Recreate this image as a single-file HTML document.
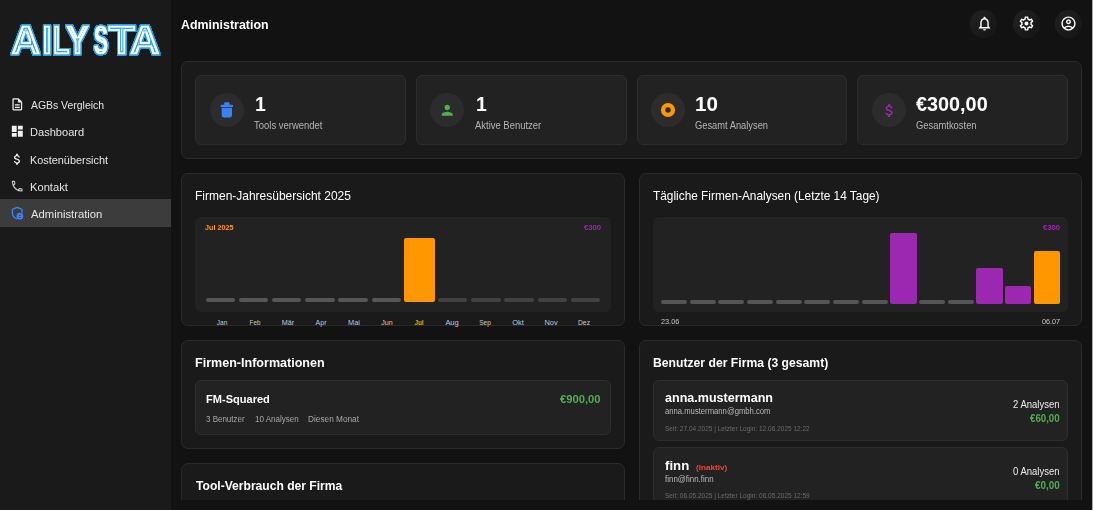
<!DOCTYPE html>
<html lang="de"><head><meta charset="utf-8"><title>Administration</title>
<style>
html,body{margin:0;padding:0;background:#121212;}
body{width:1093px;height:510px;overflow:hidden;position:relative;font-family:"Liberation Sans", sans-serif;}
.b{position:absolute;display:block}
#main{position:absolute;left:170.7px;top:0;width:921.3px;height:499.7px;background:#121212;overflow:hidden}
#edge{position:absolute;left:1092px;top:0;width:1px;height:510px;background:#aaaaaa}
#main .in{position:absolute;left:-170.7px;top:0;width:1093px;height:710px}
#side{position:absolute;left:0;top:0;width:170.7px;height:510px;background:#1a1a1a;overflow:hidden}
.t{position:absolute;white-space:nowrap;line-height:1;display:block}
.act{position:absolute;left:0;top:199.3px;width:170.7px;height:27.4px;background:#3c3c3c}
</style></head>
<body>
<nav id="side">
<div class="act"></div>
<svg class="b" style="left:0;top:0" width="171" height="80" viewBox="0 0 171 80">
<filter id="lg" x="-5%" y="-15%" width="110%" height="130%" color-interpolation-filters="sRGB">
<feComponentTransfer in="SourceAlpha" result="boost"><feFuncA type="linear" slope="5"/></feComponentTransfer>
<feMorphology in="boost" operator="dilate" radius="1" result="d1"/>
<feFlood flood-color="#1e9fe6"/><feComposite in2="d1" operator="in" result="outer"/>
<feMorphology in="SourceAlpha" operator="erode" radius="2" result="e2"/>
<feFlood flood-color="#1e9fe6"/><feComposite in2="e2" operator="in" result="inner"/>
<feMorphology in="SourceAlpha" operator="erode" radius="3" result="e3"/>
<feFlood flood-color="#ffffff"/><feComposite in2="e3" operator="in" result="core"/>
<feMerge><feMergeNode in="outer"/><feMergeNode in="SourceGraphic"/><feMergeNode in="inner"/><feMergeNode in="core"/></feMerge>
</filter>
<text y="54.3" font-family='"Liberation Sans", sans-serif' font-weight="700" font-size="40.5" fill="#ffffff" stroke="#ffffff" stroke-width="0.7" filter="url(#lg)"><tspan x="11.08" textLength="29.60" lengthAdjust="spacingAndGlyphs">A</tspan><tspan x="41.85" textLength="10.61" lengthAdjust="spacingAndGlyphs">I</tspan><tspan x="52.84" textLength="17.02" lengthAdjust="spacingAndGlyphs">L</tspan><tspan x="65.91" textLength="22.94" lengthAdjust="spacingAndGlyphs">Y</tspan><tspan x="93.78" textLength="14.25" lengthAdjust="spacingAndGlyphs">S</tspan><tspan x="108.20" textLength="26.97" lengthAdjust="spacingAndGlyphs">T</tspan><tspan x="129.66" textLength="30.25" lengthAdjust="spacingAndGlyphs">A</tspan></text>
</svg>
<svg class="b" style="left:9.70px;top:96.90px" width="14.6" height="14.6" viewBox="0 0 24 24"><path fill="#f0f0f0" fill-rule="evenodd" d="M8 16h8v2H8zm0-4h8v2H8zm6-10H6c-1.1 0-2 .9-2 2v16c0 1.1.89 2 1.99 2H18c1.1 0 2-.9 2-2V8l-6-6zm4 18H6V4h7v5h5v11z"/></svg>
<svg class="b" style="left:9.70px;top:124.30px" width="14.6" height="14.6" viewBox="0 0 24 24"><path fill="#f0f0f0" fill-rule="evenodd" d="M3 13h8V3H3v10zm0 8h8v-6H3v6zm10 0h8V11h-8v10zm0-18v6h8V3h-8z"/></svg>
<svg class="b" style="left:9.70px;top:151.70px" width="14.6" height="14.6" viewBox="0 0 24 24"><path fill="#f0f0f0" fill-rule="evenodd" d="M11.8 10.9c-2.27-.59-3-1.2-3-2.15 0-1.09 1.01-1.85 2.7-1.85 1.78 0 2.44.85 2.5 2.1h2.21c-.07-1.72-1.12-3.3-3.21-3.81V3h-3v2.16c-1.94.42-3.5 1.68-3.5 3.61 0 2.31 1.91 3.46 4.7 4.13 2.5.6 3 1.48 3 2.41 0 .69-.49 1.79-2.7 1.79-2.06 0-2.87-.92-2.98-2.1h-2.2c.12 2.19 1.76 3.42 3.68 3.83V21h3v-2.15c1.95-.37 3.5-1.5 3.5-3.55 0-2.84-2.43-3.81-4.7-4.4z"/></svg>
<svg class="b" style="left:9.90px;top:178.80px" width="14.4" height="14.4" viewBox="0 0 24 24"><path fill="#f4f4f4" stroke="#1a1a1a" stroke-width="0.55" fill-rule="evenodd" d="M6.54 5c.06.89.21 1.76.45 2.59l-1.2 1.2c-.41-1.2-.67-2.47-.76-3.79h1.51m9.86 12.02c.85.24 1.72.39 2.6.45v1.49c-1.32-.09-2.59-.35-3.8-.75l1.2-1.19M7.5 3H4c-.55 0-1 .45-1 1 0 9.39 7.61 17 17 17 .55 0 1-.45 1-1v-3.49c0-.55-.45-1-1-1-1.24 0-2.45-.2-3.57-.57-.1-.04-.21-.05-.31-.05-.26 0-.51.1-.71.29l-2.2 2.2c-2.83-1.45-5.15-3.76-6.59-6.59l2.2-2.2c.28-.28.36-.67.25-1.02C8.7 6.45 8.5 5.25 8.5 4c0-.55-.45-1-1-1z"/></svg>
<svg class="b" style="left:8px;top:204px" width="20" height="20" viewBox="8 204 20 20"><path fill="none" stroke="#3b82f6" stroke-width="1.35" stroke-linejoin="round" stroke-linecap="round" d="M22.0 212.2V209.4L17.2 207.3L12.4 209.4V212.6C12.4 215.5 14.3 217.9 16.6 218.8"/><circle cx="19.9" cy="216.2" r="3.35" fill="#3b82f6"/><circle cx="19.9" cy="215.2" r="0.75" fill="#3c3c3c"/><path d="M18.3 217.7a1.7 1.0 0 0 1 3.2 0z" fill="#3c3c3c"/></svg>
<span class="t" id="t0" style="left:30.50px;transform-origin:0 50%;top:100.29px;font-size:11.5px;font-weight:400;color:#e4e4e4;transform:scaleX(0.9065);">AGBs Vergleich</span>
<span class="t" id="t1" style="left:29.66px;transform-origin:0 50%;top:127.29px;font-size:11.5px;font-weight:400;color:#e4e4e4;transform:scaleX(0.9630);">Dashboard</span>
<span class="t" id="t2" style="left:29.66px;transform-origin:0 50%;top:155.29px;font-size:11.5px;font-weight:400;color:#e4e4e4;transform:scaleX(0.9460);">Kostenübersicht</span>
<span class="t" id="t3" style="left:29.66px;transform-origin:0 50%;top:182.29px;font-size:11.5px;font-weight:400;color:#e4e4e4;transform:scaleX(0.9711);">Kontakt</span>
<span class="t" id="t4" style="left:30.70px;transform-origin:0 50%;top:209.29px;font-size:11.5px;font-weight:400;color:#e4e4e4;transform:scaleX(0.9788);">Administration</span>
</nav>
<main id="main"><div class="in">
<div class="b" style="left:181.30px;top:61.20px;width:901.00px;height:97.80px;background:#1a1a1a;border:1px solid #2a2a2a;box-sizing:border-box;border-radius:7px;"></div>
<div class="b" style="left:195.30px;top:75.30px;width:210.30px;height:69.60px;background:#222222;border:1px solid #2d2d2d;box-sizing:border-box;border-radius:6px;"></div>
<div class="b" style="left:209.65px;top:93.25px;width:33.90px;height:33.90px;background:#2c2c2c;border-radius:18px;"></div>
<div class="b" style="left:416.00px;top:75.30px;width:211.00px;height:69.60px;background:#222222;border:1px solid #2d2d2d;box-sizing:border-box;border-radius:6px;"></div>
<div class="b" style="left:430.35px;top:93.25px;width:33.90px;height:33.90px;background:#2c2c2c;border-radius:18px;"></div>
<div class="b" style="left:637.00px;top:75.30px;width:210.30px;height:69.60px;background:#222222;border:1px solid #2d2d2d;box-sizing:border-box;border-radius:6px;"></div>
<div class="b" style="left:651.35px;top:93.25px;width:33.90px;height:33.90px;background:#2c2c2c;border-radius:18px;"></div>
<div class="b" style="left:857.40px;top:75.30px;width:210.60px;height:69.60px;background:#222222;border:1px solid #2d2d2d;box-sizing:border-box;border-radius:6px;"></div>
<div class="b" style="left:871.75px;top:93.25px;width:33.90px;height:33.90px;background:#2c2c2c;border-radius:18px;"></div>
<div class="b" style="left:181.30px;top:173.10px;width:443.70px;height:153.00px;background:#1a1a1a;border:1px solid #2a2a2a;box-sizing:border-box;border-radius:7px;"></div>
<div class="b" style="left:638.90px;top:173.10px;width:443.40px;height:153.00px;background:#1a1a1a;border:1px solid #2a2a2a;box-sizing:border-box;border-radius:7px;"></div>
<div class="b" style="left:195.20px;top:216.80px;width:415.70px;height:94.90px;background:#222222;border-radius:6px;"></div>
<div class="b" style="left:653.20px;top:216.80px;width:414.60px;height:94.90px;background:#222222;border-radius:6px;"></div>
<div class="b" style="left:205.50px;top:297.90px;width:29.60px;height:4.00px;background:#565656;border-radius:2px;"></div>
<div class="b" style="left:238.70px;top:297.90px;width:29.60px;height:4.00px;background:#565656;border-radius:2px;"></div>
<div class="b" style="left:271.90px;top:297.90px;width:29.60px;height:4.00px;background:#565656;border-radius:2px;"></div>
<div class="b" style="left:305.10px;top:297.90px;width:29.60px;height:4.00px;background:#565656;border-radius:2px;"></div>
<div class="b" style="left:338.30px;top:297.90px;width:29.60px;height:4.00px;background:#565656;border-radius:2px;"></div>
<div class="b" style="left:371.50px;top:297.90px;width:29.60px;height:4.00px;background:#565656;border-radius:2px;"></div>
<div class="b" style="left:404.40px;top:238.10px;width:30.30px;height:63.80px;background:#ff9800;border-radius:2px;"></div>
<div class="b" style="left:437.90px;top:297.90px;width:29.60px;height:4.00px;background:#424242;border-radius:2px;"></div>
<div class="b" style="left:471.10px;top:297.90px;width:29.60px;height:4.00px;background:#424242;border-radius:2px;"></div>
<div class="b" style="left:504.30px;top:297.90px;width:29.60px;height:4.00px;background:#424242;border-radius:2px;"></div>
<div class="b" style="left:537.50px;top:297.90px;width:29.60px;height:4.00px;background:#424242;border-radius:2px;"></div>
<div class="b" style="left:570.70px;top:297.90px;width:29.60px;height:4.00px;background:#424242;border-radius:2px;"></div>
<div class="b" style="left:660.90px;top:299.80px;width:26.20px;height:4.20px;background:#555555;border-radius:2px;"></div>
<div class="b" style="left:689.58px;top:299.80px;width:26.20px;height:4.20px;background:#555555;border-radius:2px;"></div>
<div class="b" style="left:718.26px;top:299.80px;width:26.20px;height:4.20px;background:#555555;border-radius:2px;"></div>
<div class="b" style="left:746.94px;top:299.80px;width:26.20px;height:4.20px;background:#555555;border-radius:2px;"></div>
<div class="b" style="left:775.62px;top:299.80px;width:26.20px;height:4.20px;background:#555555;border-radius:2px;"></div>
<div class="b" style="left:804.30px;top:299.80px;width:26.20px;height:4.20px;background:#555555;border-radius:2px;"></div>
<div class="b" style="left:832.98px;top:299.80px;width:26.20px;height:4.20px;background:#555555;border-radius:2px;"></div>
<div class="b" style="left:861.66px;top:299.80px;width:26.20px;height:4.20px;background:#555555;border-radius:2px;"></div>
<div class="b" style="left:890.34px;top:232.60px;width:26.30px;height:71.40px;background:#9c27b0;border-radius:2px;"></div>
<div class="b" style="left:919.02px;top:299.80px;width:26.20px;height:4.20px;background:#555555;border-radius:2px;"></div>
<div class="b" style="left:947.70px;top:299.80px;width:26.20px;height:4.20px;background:#555555;border-radius:2px;"></div>
<div class="b" style="left:976.38px;top:268.20px;width:26.30px;height:35.80px;background:#9c27b0;border-radius:2px;"></div>
<div class="b" style="left:1005.06px;top:285.80px;width:26.30px;height:18.20px;background:#9c27b0;border-radius:2px;"></div>
<div class="b" style="left:1033.74px;top:250.70px;width:26.30px;height:53.30px;background:#ff9800;border-radius:2px;"></div>
<div class="b" style="left:181.30px;top:340.10px;width:443.70px;height:108.70px;background:#1a1a1a;border:1px solid #2a2a2a;box-sizing:border-box;border-radius:7px;"></div>
<div class="b" style="left:195.20px;top:380.40px;width:415.70px;height:54.40px;background:#222222;border:1px solid #2d2d2d;box-sizing:border-box;border-radius:6px;"></div>
<div class="b" style="left:181.30px;top:463.20px;width:443.70px;height:176.80px;background:#1a1a1a;border:1px solid #2a2a2a;box-sizing:border-box;border-radius:7px;"></div>
<div class="b" style="left:638.90px;top:340.10px;width:443.40px;height:299.90px;background:#1a1a1a;border:1px solid #2a2a2a;box-sizing:border-box;border-radius:7px;"></div>
<div class="b" style="left:653.20px;top:380.40px;width:414.40px;height:60.60px;background:#222222;border:1px solid #2d2d2d;box-sizing:border-box;border-radius:6px;"></div>
<div class="b" style="left:653.20px;top:447.00px;width:414.40px;height:60.60px;background:#222222;border:1px solid #2d2d2d;box-sizing:border-box;border-radius:6px;"></div>
<div class="b" style="left:969.70px;top:10.00px;width:27.60px;height:27.60px;background:linear-gradient(135deg,#222222 0%,#1b1b1b 50%,#151515 100%);border-radius:14px;"></div>
<div class="b" style="left:1012.60px;top:10.00px;width:27.60px;height:27.60px;background:linear-gradient(135deg,#222222 0%,#1b1b1b 50%,#151515 100%);border-radius:14px;"></div>
<div class="b" style="left:1054.60px;top:10.00px;width:27.60px;height:27.60px;background:linear-gradient(135deg,#222222 0%,#1b1b1b 50%,#151515 100%);border-radius:14px;"></div>
<svg class="b" style="left:975.50px;top:14.90px" width="17" height="17" viewBox="0 0 24 24"><path fill="#fff" fill-rule="evenodd" d="M12 22c1.1 0 2-.9 2-2h-4c0 1.1.9 2 2 2zm6-6v-5c0-3.070-1.630-5.640-4.500-6.320V4c0-.83-.67-1.500-1.500-1.500s-1.500.67-1.500 1.500v.68C7.640 5.360 6 7.920 6 11v5l-2 2v1h16v-1l-2-2zm-2 1H8v-6c0-2.480 1.510-4.500 4-4.500s4 2.020 4 4.500v6z"/></svg>
<svg class="b" style="left:1017.70px;top:14.90px" width="17" height="17" viewBox="0 0 24 24"><path fill="#fff" fill-rule="evenodd" d="M19.430 12.980c.04-.32.07-.64.07-.98 0-.34-.03-.66-.07-.98l2.110-1.650c.19-.15.24-.42.12-.64l-2-3.460c-.09-.16-.26-.25-.44-.25-.06 0-.12.010-.17.030l-2.490 1c-.52-.4-1.080-.73-1.690-.98l-.38-2.650C14.460 2.180 14.250 2 14 2h-4c-.25 0-.46.18-.49.42l-.38 2.650c-.61.25-1.170.59-1.690.98l-2.490-1c-.06-.02-.12-.03-.18-.03-.17 0-.34.09-.43.25l-2 3.460c-.13.22-.07.49.12.64l2.110 1.650c-.04.32-.07.650-.07.980 0 .33.030.66.070.98l-2.110 1.650c-.19.15-.24.42-.12.64l2 3.460c.09.16.26.25.44.25.06 0 .12-.01.17-.03l2.490-1c.52.4 1.080.73 1.690.98l.38 2.650c.03.24.24.42.49.42h4c.25 0 .46-.18.49-.42l.38-2.650c.61-.25 1.170-.59 1.690-.98l2.490 1c.06.02.12.03.18.03.17 0 .34-.09.43-.25l2-3.460c.12-.22.07-.49-.12-.64l-2.110-1.650zm-1.980-1.710c.04.31.05.52.05.73 0 .21-.02.43-.05.73l-.14 1.130.89.7 1.080.84-.7 1.210-1.270-.51-1.040-.42-.9.68c-.43.32-.84.56-1.250.73l-1.060.43-.16 1.130-.2 1.350h-1.400l-.19-1.350-.16-1.130-1.060-.43c-.43-.18-.83-.41-1.230-.71l-.91-.7-1.060.43-1.270.51-.7-1.210 1.080-.84.89-.7-.14-1.130c-.03-.31-.05-.54-.05-.74s.02-.43.05-.73l.14-1.130-.89-.7-1.080-.84.7-1.210 1.270.51 1.040.42.9-.68c.43-.32.84-.56 1.250-.73l1.060-.43.16-1.130.2-1.350h1.390l.19 1.350.16 1.130 1.060.43c.43.18.83.41 1.230.71l.91.7 1.060-.43 1.270-.51.7 1.210-1.070.85-.89.7.14 1.130zM12 9.2c-1.55 0-2.8 1.25-2.8 2.8s1.25 2.8 2.8 2.8 2.8-1.25 2.8-2.8-1.25-2.8-2.8-2.8z"/></svg>
<svg class="b" style="left:1059.90px;top:15.00px" width="17" height="17" viewBox="0 0 24 24"><path fill="#fff" fill-rule="evenodd" d="M12 2C6.480 2 2 6.480 2 12s4.480 10 10 10 10-4.480 10-10S17.520 2 12 2zM7.350 18.500C8.660 17.560 10.260 17 12 17s3.340.56 4.650 1.500c-1.310.94-2.910 1.500-4.650 1.500s-3.340-.56-4.650-1.500zm10.790-1.380C16.450 15.800 14.320 15 12 15s-4.450.8-6.140 2.120C4.700 15.730 4 13.950 4 12c0-4.420 3.580-8 8-8s8 3.580 8 8c0 1.950-.7 3.730-1.860 5.120zM12 6c-1.930 0-3.500 1.570-3.500 3.500S10.070 13 12 13s3.500-1.570 3.500-3.500S13.930 6 12 6zm0 5c-.83 0-1.500-.67-1.500-1.500S11.170 8 12 8s1.500.67 1.500 1.500S12.830 11 12 11z"/></svg>
<svg class="b" style="left:216px;top:100px" width="22" height="20" viewBox="216 100 22 20"><g fill="#3b82f6"><rect x="224.1" y="102.2" width="5.4" height="3.4" rx="1.3"/><rect x="220.5" y="104.7" width="12.6" height="2.3" rx="1.1"/><path d="M221.7 107.8h10.3v7.4a2.2 2.2 0 0 1-2.2 2.2h-5.9a2.2 2.2 0 0 1-2.2-2.2z"/></g></svg>
<svg class="b" style="left:439.15px;top:102.15px" width="16.5" height="16.5" viewBox="0 0 24 24"><path fill="#4caf50" fill-rule="evenodd" d="M12 12c2.210 0 4-1.790 4-4s-1.790-4-4-4-4 1.790-4 4 1.790 4 4 4zm0 2c-2.670 0-8 1.340-8 4v2h16v-2c0-2.660-5.330-4-8-4z"/></svg>
<svg class="b" style="left:880.80px;top:102.00px" width="17" height="17" viewBox="0 0 24 24"><path fill="#9c27b0" fill-rule="evenodd" d="M11.8 10.9c-2.27-.59-3-1.2-3-2.15 0-1.09 1.01-1.85 2.7-1.85 1.78 0 2.44.85 2.5 2.1h2.21c-.07-1.72-1.12-3.3-3.21-3.81V3h-3v2.16c-1.94.42-3.5 1.68-3.5 3.61 0 2.31 1.91 3.46 4.7 4.13 2.5.6 3 1.48 3 2.41 0 .69-.49 1.79-2.7 1.79-2.06 0-2.87-.92-2.98-2.1h-2.2c.12 2.19 1.76 3.42 3.68 3.83V21h3v-2.15c1.95-.37 3.5-1.5 3.5-3.55 0-2.84-2.43-3.81-4.7-4.4z"/></svg>
<svg class="b" style="left:659.30px;top:101.10px" width="18" height="18" viewBox="0 0 18 18"><circle cx="9" cy="9" r="4.93" fill="none" stroke="#ff9800" stroke-width="4.35"/></svg>
<span class="t" id="t5" style="left:181.30px;transform-origin:0 50%;top:18.02px;font-size:13px;font-weight:700;color:#fff;transform:scaleX(0.9544);">Administration</span>
<span class="t" id="t6" style="left:254.70px;transform-origin:0 50%;top:94.51px;font-size:19.5px;font-weight:700;color:#fff;transform:scaleX(0.9980);">1</span>
<span class="t" id="t7" style="left:476.20px;transform-origin:0 50%;top:94.51px;font-size:19.5px;font-weight:700;color:#fff;transform:scaleX(0.9980);">1</span>
<span class="t" id="t8" style="left:695.33px;transform-origin:0 50%;top:94.51px;font-size:19.5px;font-weight:700;color:#fff;transform:scaleX(1.0548);">10</span>
<span class="t" id="t9" style="left:916.21px;transform-origin:0 50%;top:94.51px;font-size:19.5px;font-weight:700;color:#fff;transform:scaleX(1.0165);">€300,00</span>
<span class="t" id="t10" style="left:253.95px;transform-origin:0 50%;top:119.71px;font-size:11px;font-weight:400;color:#b4b4b4;transform:scaleX(0.8612);">Tools verwendet</span>
<span class="t" id="t11" style="left:475.08px;transform-origin:0 50%;top:119.71px;font-size:11px;font-weight:400;color:#b4b4b4;transform:scaleX(0.8589);">Aktive Benutzer</span>
<span class="t" id="t12" style="left:695.34px;transform-origin:0 50%;top:119.71px;font-size:11px;font-weight:400;color:#b4b4b4;transform:scaleX(0.8467);">Gesamt Analysen</span>
<span class="t" id="t13" style="left:916.20px;transform-origin:0 50%;top:119.71px;font-size:11px;font-weight:400;color:#b4b4b4;transform:scaleX(0.8542);">Gesamtkosten</span>
<span class="t" id="t14" style="left:194.86px;transform-origin:0 50%;top:189.02px;font-size:13px;font-weight:400;color:#fff;transform:scaleX(0.9222);">Firmen-Jahresübersicht 2025</span>
<span class="t" id="t15" style="left:653.17px;transform-origin:0 50%;top:189.02px;font-size:13px;font-weight:400;color:#fff;transform:scaleX(0.9122);">Tägliche Firmen-Analysen (Letzte 14 Tage)</span>
<span class="t" id="t16" style="left:204.68px;transform-origin:0 50%;top:224.25px;font-size:8px;font-weight:700;color:#ff9800;transform:scaleX(0.8985);">Jul 2025</span>
<span class="t" id="t17" style="left:584.30px;transform-origin:0 50%;top:224.25px;font-size:8px;font-weight:700;color:#9c27b0;transform:scaleX(0.9627);">€300</span>
<span class="t" id="t18" style="left:1043.04px;transform-origin:0 50%;top:224.25px;font-size:8px;font-weight:700;color:#9c27b0;transform:scaleX(0.9563);">€300</span>
<span class="t" id="t19" style="left:222.25px;transform-origin:0 50%;top:318.67px;font-size:7.5px;font-weight:400;color:#c8c8c8;transform:scaleX(0.8724) translateX(-50%);">Jan</span>
<span class="t" id="t20" style="left:254.83px;transform-origin:0 50%;top:318.67px;font-size:7.5px;font-weight:400;color:#c8c8c8;transform:scaleX(0.8375) translateX(-50%);">Feb</span>
<span class="t" id="t21" style="left:287.83px;transform-origin:0 50%;top:318.67px;font-size:7.5px;font-weight:400;color:#c8c8c8;transform:scaleX(0.9648) translateX(-50%);">Mär</span>
<span class="t" id="t22" style="left:320.75px;transform-origin:0 50%;top:318.67px;font-size:7.5px;font-weight:400;color:#c8c8c8;transform:scaleX(0.9382) translateX(-50%);">Apr</span>
<span class="t" id="t23" style="left:353.70px;transform-origin:0 50%;top:318.67px;font-size:7.5px;font-weight:400;color:#c8c8c8;transform:scaleX(0.9798) translateX(-50%);">Mai</span>
<span class="t" id="t24" style="left:386.50px;transform-origin:0 50%;top:318.67px;font-size:7.5px;font-weight:400;color:#c8c8c8;transform:scaleX(0.9468) translateX(-50%);">Jun</span>
<span class="t" id="t25" style="left:419.27px;transform-origin:0 50%;top:318.67px;font-size:7.5px;font-weight:700;color:#ff9800;transform:scaleX(0.8467) translateX(-50%);">Jul</span>
<span class="t" id="t26" style="left:452.30px;transform-origin:0 50%;top:318.67px;font-size:7.5px;font-weight:400;color:#c8c8c8;transform:scaleX(0.9918) translateX(-50%);">Aug</span>
<span class="t" id="t27" style="left:485.09px;transform-origin:0 50%;top:318.67px;font-size:7.5px;font-weight:400;color:#c8c8c8;transform:scaleX(0.8779) translateX(-50%);">Sep</span>
<span class="t" id="t28" style="left:518.40px;transform-origin:0 50%;top:318.67px;font-size:7.5px;font-weight:400;color:#c8c8c8;transform:scaleX(0.9810) translateX(-50%);">Okt</span>
<span class="t" id="t29" style="left:551.35px;transform-origin:0 50%;top:318.67px;font-size:7.5px;font-weight:400;color:#c8c8c8;transform:scaleX(0.9868) translateX(-50%);">Nov</span>
<span class="t" id="t30" style="left:584.20px;transform-origin:0 50%;top:318.67px;font-size:7.5px;font-weight:400;color:#c8c8c8;transform:scaleX(0.9004) translateX(-50%);">Dez</span>
<span class="t" id="t31" style="left:661.10px;transform-origin:0 50%;top:317.67px;font-size:7.5px;font-weight:400;color:#c8c8c8;transform:scaleX(0.9737);">23.06</span>
<span class="t" id="t32" style="left:1042.47px;transform-origin:0 50%;top:317.67px;font-size:7.5px;font-weight:400;color:#c8c8c8;transform:scaleX(0.9665);">06.07</span>
<span class="t" id="t33" style="left:194.65px;transform-origin:0 50%;top:356.02px;font-size:13px;font-weight:700;color:#fff;transform:scaleX(0.9652);">Firmen-Informationen</span>
<span class="t" id="t34" style="left:653.40px;transform-origin:0 50%;top:356.02px;font-size:13px;font-weight:700;color:#fff;transform:scaleX(0.9370);">Benutzer der Firma (3 gesamt)</span>
<span class="t" id="t35" style="left:195.92px;transform-origin:0 50%;top:479.02px;font-size:13px;font-weight:700;color:#fff;transform:scaleX(0.9304);">Tool-Verbrauch der Firma</span>
<span class="t" id="t36" style="left:206.18px;transform-origin:0 50%;top:393.71px;font-size:11px;font-weight:700;color:#fff;transform:scaleX(1.0041);">FM-Squared</span>
<span class="t" id="t37" style="left:560.02px;transform-origin:0 50%;top:393.71px;font-size:11px;font-weight:700;color:#4caf50;transform:scaleX(1.0214);">€900,00</span>
<span class="t" id="t38" style="left:206.40px;transform-origin:0 50%;top:414.82px;font-size:8.5px;font-weight:400;color:#a8a8a8;transform:scaleX(0.9383);">3 Benutzer</span>
<span class="t" id="t39" style="left:255.20px;transform-origin:0 50%;top:414.82px;font-size:8.5px;font-weight:400;color:#a8a8a8;transform:scaleX(0.9419);">10 Analysen</span>
<span class="t" id="t40" style="left:308.08px;transform-origin:0 50%;top:414.82px;font-size:8.5px;font-weight:400;color:#a8a8a8;transform:scaleX(0.9721);">Diesen Monat</span>
<span class="t" id="t41" style="left:664.87px;transform-origin:0 50%;top:392.44px;font-size:12.5px;font-weight:700;color:#fff;transform:scaleX(1.0032);">anna.mustermann</span>
<span class="t" id="t42" style="left:665.20px;transform-origin:0 50%;top:406.82px;font-size:8.5px;font-weight:400;color:#b8b8b8;transform:scaleX(0.9032);">anna.mustermann@gmbh.com</span>
<span class="t" id="t43" style="left:665.30px;transform-origin:0 50%;top:424.67px;font-size:7.5px;font-weight:400;color:#6a6a6a;transform:scaleX(0.8684);">Seit: 27.04.2025 | Letzter Login: 12.06.2025 12:22</span>
<span class="t" id="t44" style="left:1013.14px;transform-origin:0 50%;top:399.56px;font-size:10px;font-weight:400;color:#ececec;transform:scaleX(0.9491);">2 Analysen</span>
<span class="t" id="t45" style="left:1030.12px;transform-origin:0 50%;top:413.56px;font-size:10px;font-weight:700;color:#4caf50;transform:scaleX(0.9696);">€60,00</span>
<span class="t" id="t46" style="left:664.83px;transform-origin:0 50%;top:460.44px;font-size:12.5px;font-weight:700;color:#fff;transform:scaleX(1.0560);">finn</span>
<span class="t" id="t47" style="left:695.96px;transform-origin:0 50%;top:464.25px;font-size:8px;font-weight:700;color:#f44336;transform:scaleX(1.0201);">(Inaktiv)</span>
<span class="t" id="t48" style="left:665.35px;transform-origin:0 50%;top:474.82px;font-size:8.5px;font-weight:400;color:#b8b8b8;transform:scaleX(0.9330);">finn@finn.finn</span>
<span class="t" id="t49" style="left:665.30px;transform-origin:0 50%;top:491.67px;font-size:7.5px;font-weight:400;color:#6a6a6a;transform:scaleX(0.8684);">Seit: 06.05.2025 | Letzter Login: 06.05.2025 12:59</span>
<span class="t" id="t50" style="left:1013.00px;transform-origin:0 50%;top:466.56px;font-size:10px;font-weight:400;color:#ececec;transform:scaleX(0.9503);">0 Analysen</span>
<span class="t" id="t51" style="left:1035.20px;transform-origin:0 50%;top:480.56px;font-size:10px;font-weight:700;color:#4caf50;transform:scaleX(0.9847);">€0,00</span>
</div></main>
<div id="edge"></div>
</body></html>
